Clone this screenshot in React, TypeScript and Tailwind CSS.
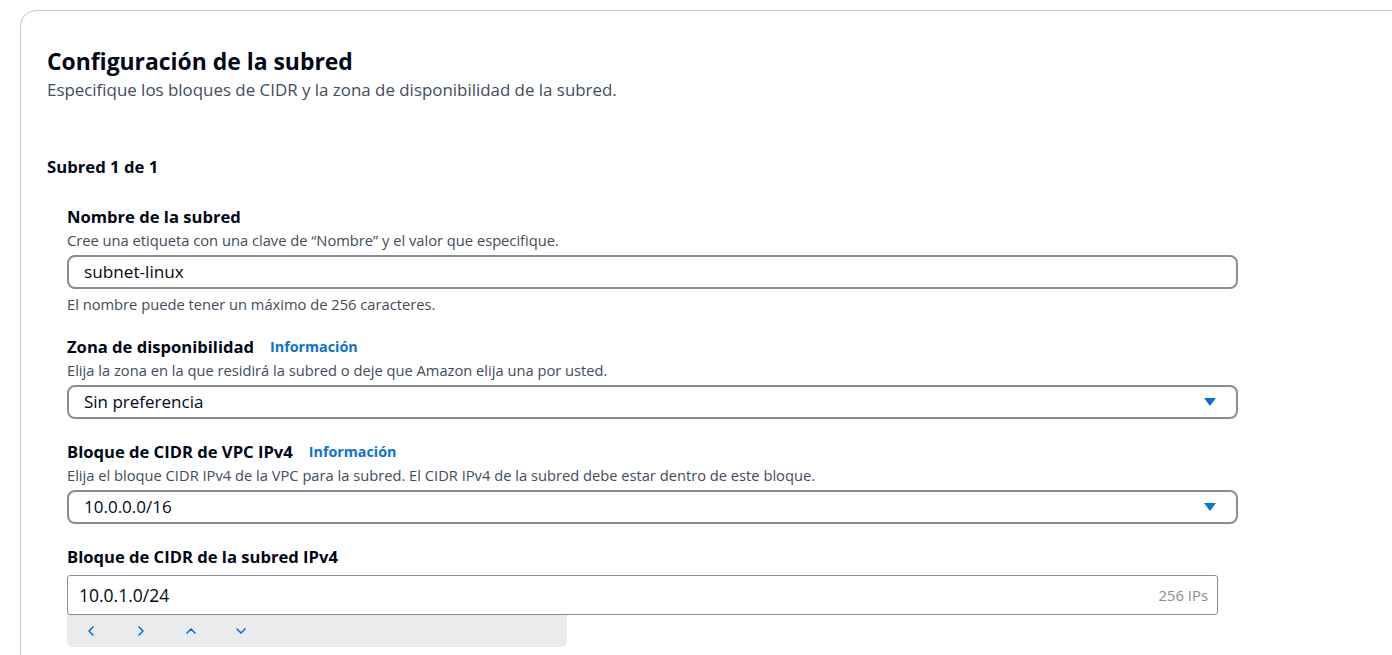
import { ChevronLeft, ChevronRight, ChevronUp, ChevronDown } from "lucide-react";

function Label({ text, info }: { text: string; info?: boolean }) {
  return (
    <div className="flex h-[24px] items-center gap-[16px]">
      <span className="text-[16.6px] font-bold leading-[24px] text-[#000716]">{text}</span>
      {info && <span className="text-[14.3px] font-bold leading-[24px] text-[#0972d3]">Información</span>}
    </div>
  );
}

function Desc({ text }: { text: string }) {
  return <div className="text-[14.7px] leading-[22px] text-[#414d5c]">{text}</div>;
}

function Select({ value }: { value: string }) {
  return (
    <div className="mt-[4px] flex h-[34px] w-[1171px] items-center justify-between rounded-[8px] border-2 border-[#8c8c94] pl-[15px] pr-[19px]">
      <span className="text-[17px] text-[#000716]">{value}</span>
      <svg width="14" height="10" viewBox="0 0 14 10">
        <path d="M1 1 H13 L7 9 Z" fill="#0972d3" />
      </svg>
    </div>
  );
}

export default function App() {
  return (
    <div className="h-[655px] overflow-hidden bg-white pl-[20px] pt-[10px]" style={{ fontFamily: '"Open Sans", "Noto Sans", sans-serif' }}>
      <div className="w-[1420px] rounded-tl-[16px] border border-[#c6c6cd] pl-[26px] pt-[35px] pb-[40px]">
        <h1 className="text-[22.9px] font-bold leading-[32px] text-[#000716]">Configuración de la subred</h1>
        <p className="text-[16.9px] leading-[24px] text-[#414d5c]">Especifique los bloques de CIDR y la zona de disponibilidad de la subred.</p>

        <h2 className="mt-[53px] text-[16.7px] font-bold leading-[24px] text-[#000716]">Subred 1 de 1</h2>

        <div className="ml-[20px] mt-[26px] flex flex-col">
          <Label text="Nombre de la subred" />
          <Desc text="Cree una etiqueta con una clave de “Nombre” y el valor que especifique." />
          <div className="mt-[4px] flex h-[34px] w-[1171px] items-center rounded-[8px] border-2 border-[#8c8c94] pl-[15px]">
            <span className="text-[17.2px] text-[#000716]">subnet-linux</span>
          </div>
          <div className="mt-[4px] text-[14.7px] leading-[22px] text-[#414d5c]">El nombre puede tener un máximo de 256 caracteres.</div>

          <div className="mt-[20px]">
            <Label text="Zona de disponibilidad" info />
            <Desc text="Elija la zona en la que residirá la subred o deje que Amazon elija una por usted." />
            <Select value="Sin preferencia" />
          </div>

          <div className="mt-[21px]">
            <Label text="Bloque de CIDR de VPC IPv4" info />
            <Desc text="Elija el bloque CIDR IPv4 de la VPC para la subred. El CIDR IPv4 de la subred debe estar dentro de este bloque." />
            <Select value="10.0.0.0/16" />
          </div>

          <div className="mt-[21px]">
            <Label text="Bloque de CIDR de la subred IPv4" />
            <div className="mt-[6px] flex h-[40px] w-[1151px] items-center justify-between rounded-[3px] border border-[#8c8c94] pl-[11px] pr-[9px]">
              <span className="text-[17.5px] text-[#000716]">10.0.1.0/24</span>
              <span className="text-[14.9px] text-[#8c8c94]">256 IPs</span>
            </div>
            <div className="flex h-[32px] w-[500px] items-center gap-[34px] rounded-b-[6px] bg-[#e9ebed] pl-[16px]">
              <ChevronLeft size={16} strokeWidth={2.5} color="#0972d3" />
              <ChevronRight size={16} strokeWidth={2.5} color="#0972d3" />
              <ChevronUp size={16} strokeWidth={2.5} color="#0972d3" />
              <ChevronDown size={16} strokeWidth={2.5} color="#0972d3" />
            </div>
          </div>
        </div>
      </div>
    </div>
  );
}
